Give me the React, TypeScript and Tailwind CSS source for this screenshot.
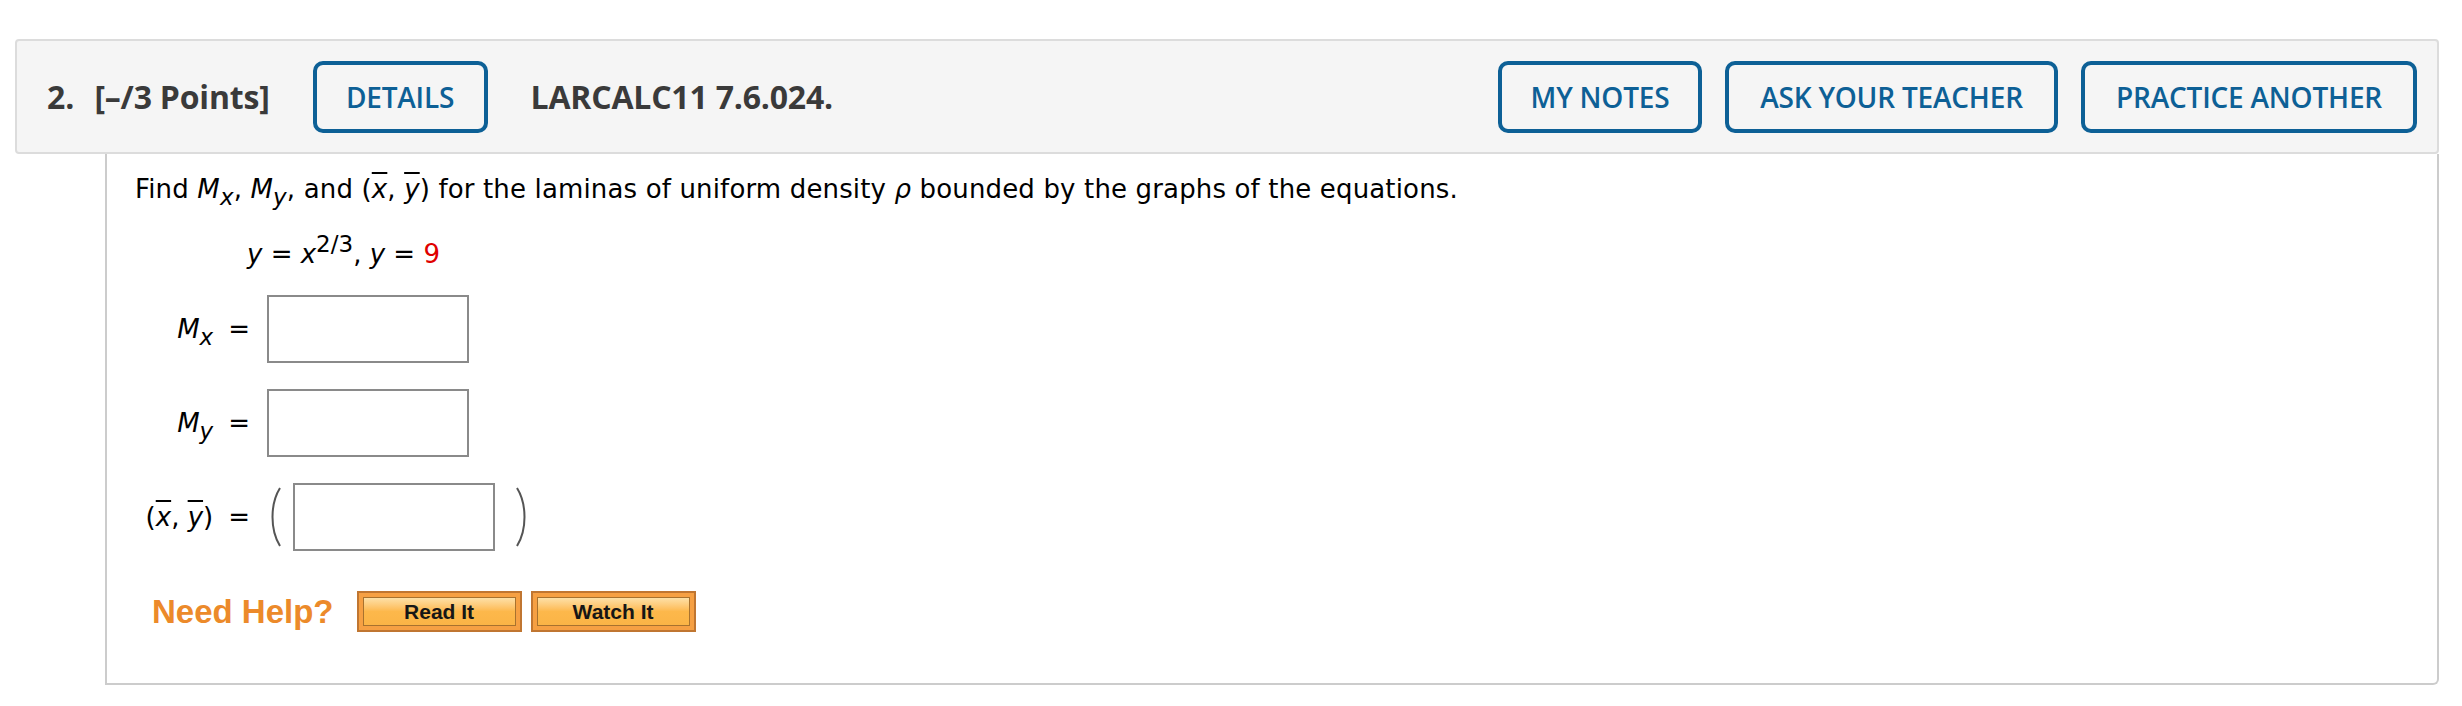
import React from 'react';

const sans = { fontFamily: '"Open Sans", "Noto Sans", sans-serif' };
const verd = { fontFamily: '"DejaVu Sans", Verdana, sans-serif' };

function HeadButton({ label, w }: { label: string; w: string }) {
  return (
    <div className={`${w} h-[72px] shrink-0 flex items-center justify-center border-4 border-[#0d6096] rounded-[10px] text-[28px] font-semibold text-[#0d6096] tracking-[-0.2px]`}>
      {label}
    </div>
  );
}

function Sub({ c }: { c: string }) {
  return <span className="italic text-[23px] relative top-[7px]">{c}</span>;
}

function Bar({ c }: { c: string }) {
  return <span className="italic overline decoration-[2px]">{c}</span>;
}

function Box() {
  return <div className="w-[202px] h-[68px] border-2 border-[#8a8a8a] bg-white shrink-0" />;
}

function Paren({ flip }: { flip?: boolean }) {
  return (
    <svg width="16" height="62" viewBox="0 0 16 62" className={flip ? '-scale-x-100' : ''}>
      <path d="M13 2 C3 18 3 44 13 60" fill="none" stroke="#555" strokeWidth="2" />
    </svg>
  );
}

function HelpButton({ label }: { label: string }) {
  return (
    <div className="w-[165px] h-[41px] border-2 border-[#c07631] bg-[#f6a043] p-[4px] shrink-0">
      <div className="h-full border border-[#a8722e] bg-gradient-to-b from-[#fde0a6] via-[#fdb84b] to-[#fbb446] flex items-center justify-center text-[21px] font-bold text-[#161616]" style={{ fontFamily: '"Liberation Sans", Arial, sans-serif' }}>
        {label}
      </div>
    </div>
  );
}

export default function App() {
  return (
    <div className="bg-white min-h-[706px] pt-[39px] pl-[15px]">
      <div className="w-[2424px]">
        {/* cabecera de la pregunta */}
        <div className="h-[115px] border-2 border-[#dcdcdc] bg-[#f5f5f5] rounded-[4px] flex items-center pl-[30px] pr-[20px] text-[#3a3a3a]" style={sans}>
          <span className="text-[32px] font-bold">2.</span>
          <span className="text-[32px] font-bold ml-[20px] tracking-[-0.2px]">[–/3 Points]</span>
          <div className="ml-[43px]"><HeadButton label="DETAILS" w="w-[175px]" /></div>
          <span className="text-[32px] font-bold ml-[43px] tracking-[-0.2px]">LARCALC11 7.6.024.</span>
          <div className="ml-auto flex gap-[23px]">
            <HeadButton label="MY NOTES" w="w-[204px]" />
            <HeadButton label="ASK YOUR TEACHER" w="w-[333px]" />
            <HeadButton label="PRACTICE ANOTHER" w="w-[336px]" />
          </div>
        </div>

        {/* cuerpo */}
        <div className="ml-[90px] h-[531px] border-2 border-t-0 border-[#cccccc] rounded-br-[6px] pl-[28px] pt-[19px] text-[26px] text-black" style={verd}>
          <div className="leading-[32px] whitespace-nowrap tracking-[0.15px]">
            Find <span className="italic">M</span><Sub c="x" />, <span className="italic">M</span><Sub c="y" />, and (<Bar c="x" />, <Bar c="y" />) for the laminas of uniform density <span className="italic">ρ</span> bounded by the graphs of the equations.
          </div>
          <div className="leading-[32px] mt-[32px] pl-[112px] whitespace-nowrap">
            <span className="italic">y</span> = <span className="italic">x</span><span className="text-[23px] relative -top-[11px]">2/3</span>, <span className="italic">y</span> = <span className="text-[#e00000]">9</span>
          </div>

          <div className="-ml-[28px] mt-[24px] flex flex-col gap-[26px]">
            <div className="flex items-center">
              <div className="w-[143px] flex justify-end items-center gap-[15px]">
                <span><span className="italic">M</span><Sub c="x" /></span>
                <span>=</span>
              </div>
              <div className="ml-[17px]"><Box /></div>
            </div>
            <div className="flex items-center">
              <div className="w-[143px] flex justify-end items-center gap-[15px]">
                <span><span className="italic">M</span><Sub c="y" /></span>
                <span>=</span>
              </div>
              <div className="ml-[17px]"><Box /></div>
            </div>
            <div className="flex items-center">
              <div className="w-[143px] flex justify-end items-center gap-[15px]">
                <span>(<Bar c="x" />, <Bar c="y" />)</span>
                <span>=</span>
              </div>
              <div className="ml-[17px] flex items-center">
                <Paren />
                <div className="ml-[10px]"><Box /></div>
                <div className="ml-[19px]"><Paren flip /></div>
              </div>
            </div>
          </div>

          <div className="mt-[36px] pl-[17px] flex items-center">
            <span className="text-[33px] font-bold text-[#ec8a2a]" style={{ fontFamily: '"Liberation Sans", Arial, sans-serif' }}>Need Help?</span>
            <div className="ml-[23px] flex gap-[9px]">
              <HelpButton label="Read It" />
              <HelpButton label="Watch It" />
            </div>
          </div>
        </div>
      </div>
    </div>
  );
}
